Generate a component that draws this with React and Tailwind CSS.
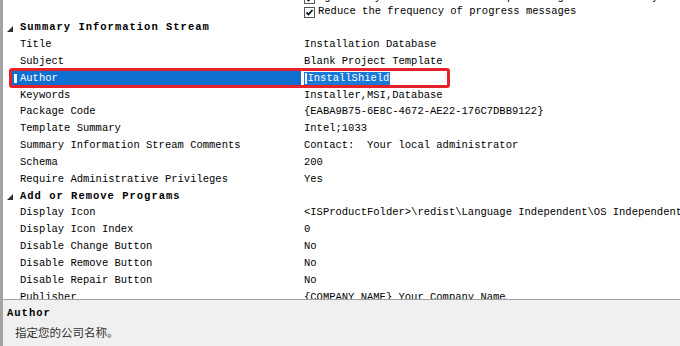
const rows = [
  { type: 'cat', name: 'Summary Information Stream' },
  { name: 'Title', value: 'Installation Database' },
  { name: 'Subject', value: 'Blank Project Template' },
  { name: 'Author', value: 'InstallShield', selected: true },
  { name: 'Keywords', value: 'Installer,MSI,Database' },
  { name: 'Package Code', value: '{EABA9B75-6E8C-4672-AE22-176C7DBB9122}' },
  { name: 'Template Summary', value: 'Intel;1033' },
  { name: 'Summary Information Stream Comments', value: 'Contact:  Your local administrator' },
  { name: 'Schema', value: '200' },
  { name: 'Require Administrative Privileges', value: 'Yes' },
  { type: 'cat', name: 'Add or Remove Programs' },
  { name: 'Display Icon', value: '<ISProductFolder>\\redist\\Language Independent\\OS Independent\\setupicon.ico' },
  { name: 'Display Icon Index', value: '0' },
  { name: 'Disable Change Button', value: 'No' },
  { name: 'Disable Remove Button', value: 'No' },
  { name: 'Disable Repair Button', value: 'No' },
  { name: 'Publisher', value: '{COMPANY_NAME} Your Company Name' },
];

const CheckBox = () => (
  <span className="w-[11px] h-[11px] border border-[#555] bg-white flex items-center justify-center shrink-0">
    <svg width="9" height="9" viewBox="0 0 9 9">
      <path d="M1.5 4.5 L3.5 6.5 L7.5 2" fill="none" stroke="#111" strokeWidth="1.8" />
    </svg>
  </span>
);

const CheckLine = ({ label }) => (
  <div className="h-[14px] flex items-center gap-[3px] whitespace-nowrap">
    <CheckBox />
    <span>{label}</span>
  </div>
);

const Row = ({ row }) => {
  if (row.type === 'cat') {
    return (
      <div className="h-[16.85px] flex items-center relative">
        <svg className="absolute left-[4px] top-[6px]" width="6" height="6" viewBox="0 0 6 6">
          <polygon points="6,0 6,6 0,6" fill="#333" />
        </svg>
        <span className="pl-[17px] font-bold tracking-[1px] whitespace-nowrap">{row.name}</span>
      </div>
    );
  }
  return (
    <div className="h-[16.85px] flex items-stretch whitespace-pre">
      <div className="w-[298px] shrink-0 flex">
        <div
          className={`ml-[9px] flex-1 flex items-center relative pl-[8px] ${
            row.selected ? 'bg-[#0f6fd1] text-white' : ''
          }`}
        >
          {row.selected && <span className="absolute left-[1.5px] top-[4px] w-[3px] h-[9px] bg-white" />}
          {row.name}
        </div>
      </div>
      <div className="flex-1 flex items-center pl-[3px] min-w-0">
        {row.selected ? (
          <span className="bg-[#1a78d6] text-white h-[13px] flex items-center pr-[1px]">
            <span className="w-[1.5px] h-[11px] bg-white mx-[1px]" />
            {row.value}
          </span>
        ) : (
          <span>{row.value}</span>
        )}
      </div>
    </div>
  );
};

export default function App() {
  return (
    <div className="w-[680px] h-[346px] overflow-hidden bg-white flex flex-col border-l-[3px] border-[#a3a3a3] font-['Liberation_Mono',monospace] text-[10.5px] text-black">
      <div className="h-[299px] shrink-0 overflow-hidden relative">
        <div className="-mt-[9px]">
          {/* partially visible row above */}
          <div className="h-[28.6px] flex">
            <div className="w-[298px] shrink-0 pl-[17px] h-[14px] flex items-center whitespace-nowrap">
              Fast Install
            </div>
            <div className="flex-1 pl-[3px]">
              <CheckLine label="Ignore any file errors and skip missing files silently" />
              <CheckLine label="Reduce the frequency of progress messages" />
            </div>
          </div>
          {rows.map((row, i) => (
            <Row key={i} row={row} />
          ))}
        </div>
        {/* red annotation box */}
        <div className="absolute left-[6px] top-[68px] w-[441px] h-[20px] border-[3px] border-[#e5212b] rounded-[3px]" />
      </div>
      <div className="flex-1 border-t border-[#a0a0a0] bg-[#f0f0f0] pt-[7px]">
        <div className="pl-[4px] h-[14px] flex items-center font-bold tracking-[1px]">Author</div>
        <div className="pl-[12px] mt-[5px] h-[14px] flex items-center font-['Noto_Sans_CJK_SC',sans-serif] text-[11.5px] text-[#333]">
          指定您的公司名称。
        </div>
      </div>
    </div>
  );
}
